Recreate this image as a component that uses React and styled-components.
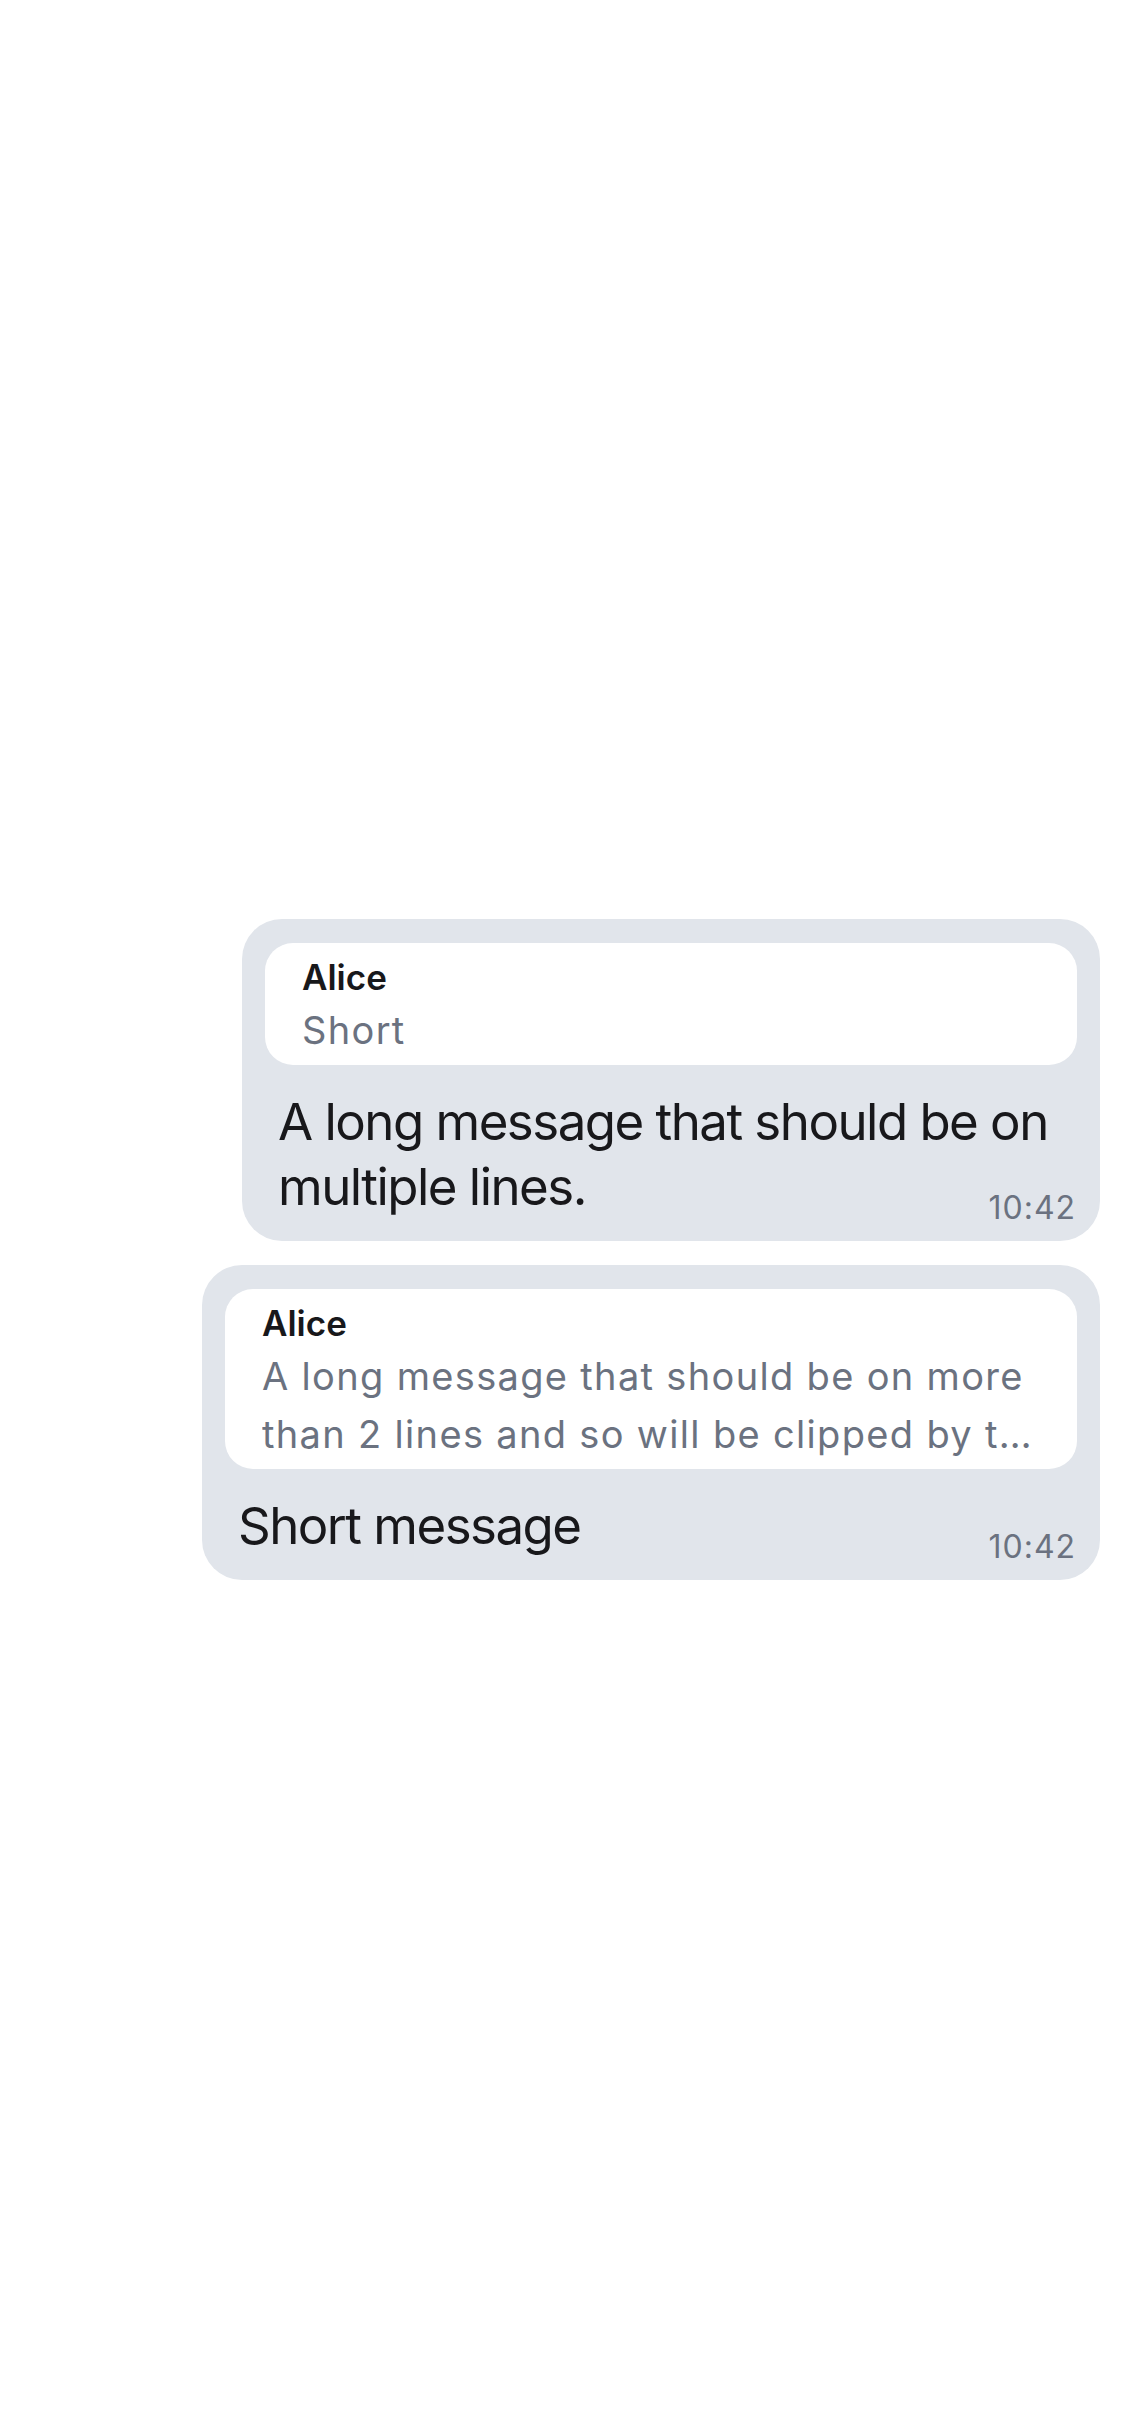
import React from "react";
import styled, { createGlobalStyle } from "styled-components";

const GlobalStyle = createGlobalStyle`
  html, body {
    margin: 0;
    padding: 0;
    background: #ffffff;
  }

  body {
    font-family: Inter, "Noto Sans", sans-serif;
    -webkit-font-smoothing: antialiased;
  }
`;

const Screen = styled.div`
  width: 1125px;
  min-height: 2436px;
  box-sizing: border-box;
  padding: 919px 25px 0 0;
  display: flex;
  flex-direction: column;
  align-items: flex-end;
  gap: 24px;
`;

const Bubble = styled.div`
  width: ${(props) => props.$width}px;
  box-sizing: border-box;
  padding: 24px 23px 22px;
  background: #e1e5eb;
  border-radius: 40px;
  display: flex;
  flex-direction: column;
  gap: 24px;
`;

const Quote = styled.div`
  background: #ffffff;
  border-radius: 28px;
  padding: 10px 30px 6px 37px;
`;

const QuoteName = styled.div`
  font-size: 35px;
  line-height: 48px;
  font-weight: 600;
  color: #18181b;
`;

const QuoteText = styled.div`
  font-size: 38px;
  line-height: 58px;
  letter-spacing: 0.035em;
  color: #6b7280;
  display: -webkit-box;
  -webkit-box-orient: vertical;
  -webkit-line-clamp: 2;
  overflow: hidden;
`;

const Body = styled.div`
  display: grid;
  padding: 0 1px 0 13px;
`;

const Text = styled.div`
  grid-area: 1 / 1;
  font-size: 51px;
  line-height: 65px;
  letter-spacing: -0.03em;
  color: #18181b;
`;

const Time = styled.span`
  grid-area: 1 / 1;
  justify-self: end;
  align-self: end;
  margin-bottom: -8px;
  font-size: 32px;
  line-height: 38px;
  letter-spacing: 0.03em;
  color: #6b7280;
`;

const messages = [
  {
    id: 1,
    width: 858,
    author: "Alice",
    quoted: "Short",
    text: "A long message that should be on multiple lines.",
    time: "10:42",
  },
  {
    id: 2,
    width: 898,
    author: "Alice",
    quoted:
      "A long message that should be on more than 2 lines and so will be clipped by the bubble",
    text: "Short message",
    time: "10:42",
  },
];

const Message = ({ msg }) => (
  <Bubble $width={msg.width}>
    <Quote>
      <QuoteName>{msg.author}</QuoteName>
      <QuoteText>{msg.quoted}</QuoteText>
    </Quote>
    <Body>
      <Text>{msg.text}</Text>
      <Time>{msg.time}</Time>
    </Body>
  </Bubble>
);

const App = () => (
  <>
    <GlobalStyle />
    <Screen>
      {messages.map((msg) => (
        <Message key={msg.id} msg={msg} />
      ))}
    </Screen>
  </>
);

export default App;
